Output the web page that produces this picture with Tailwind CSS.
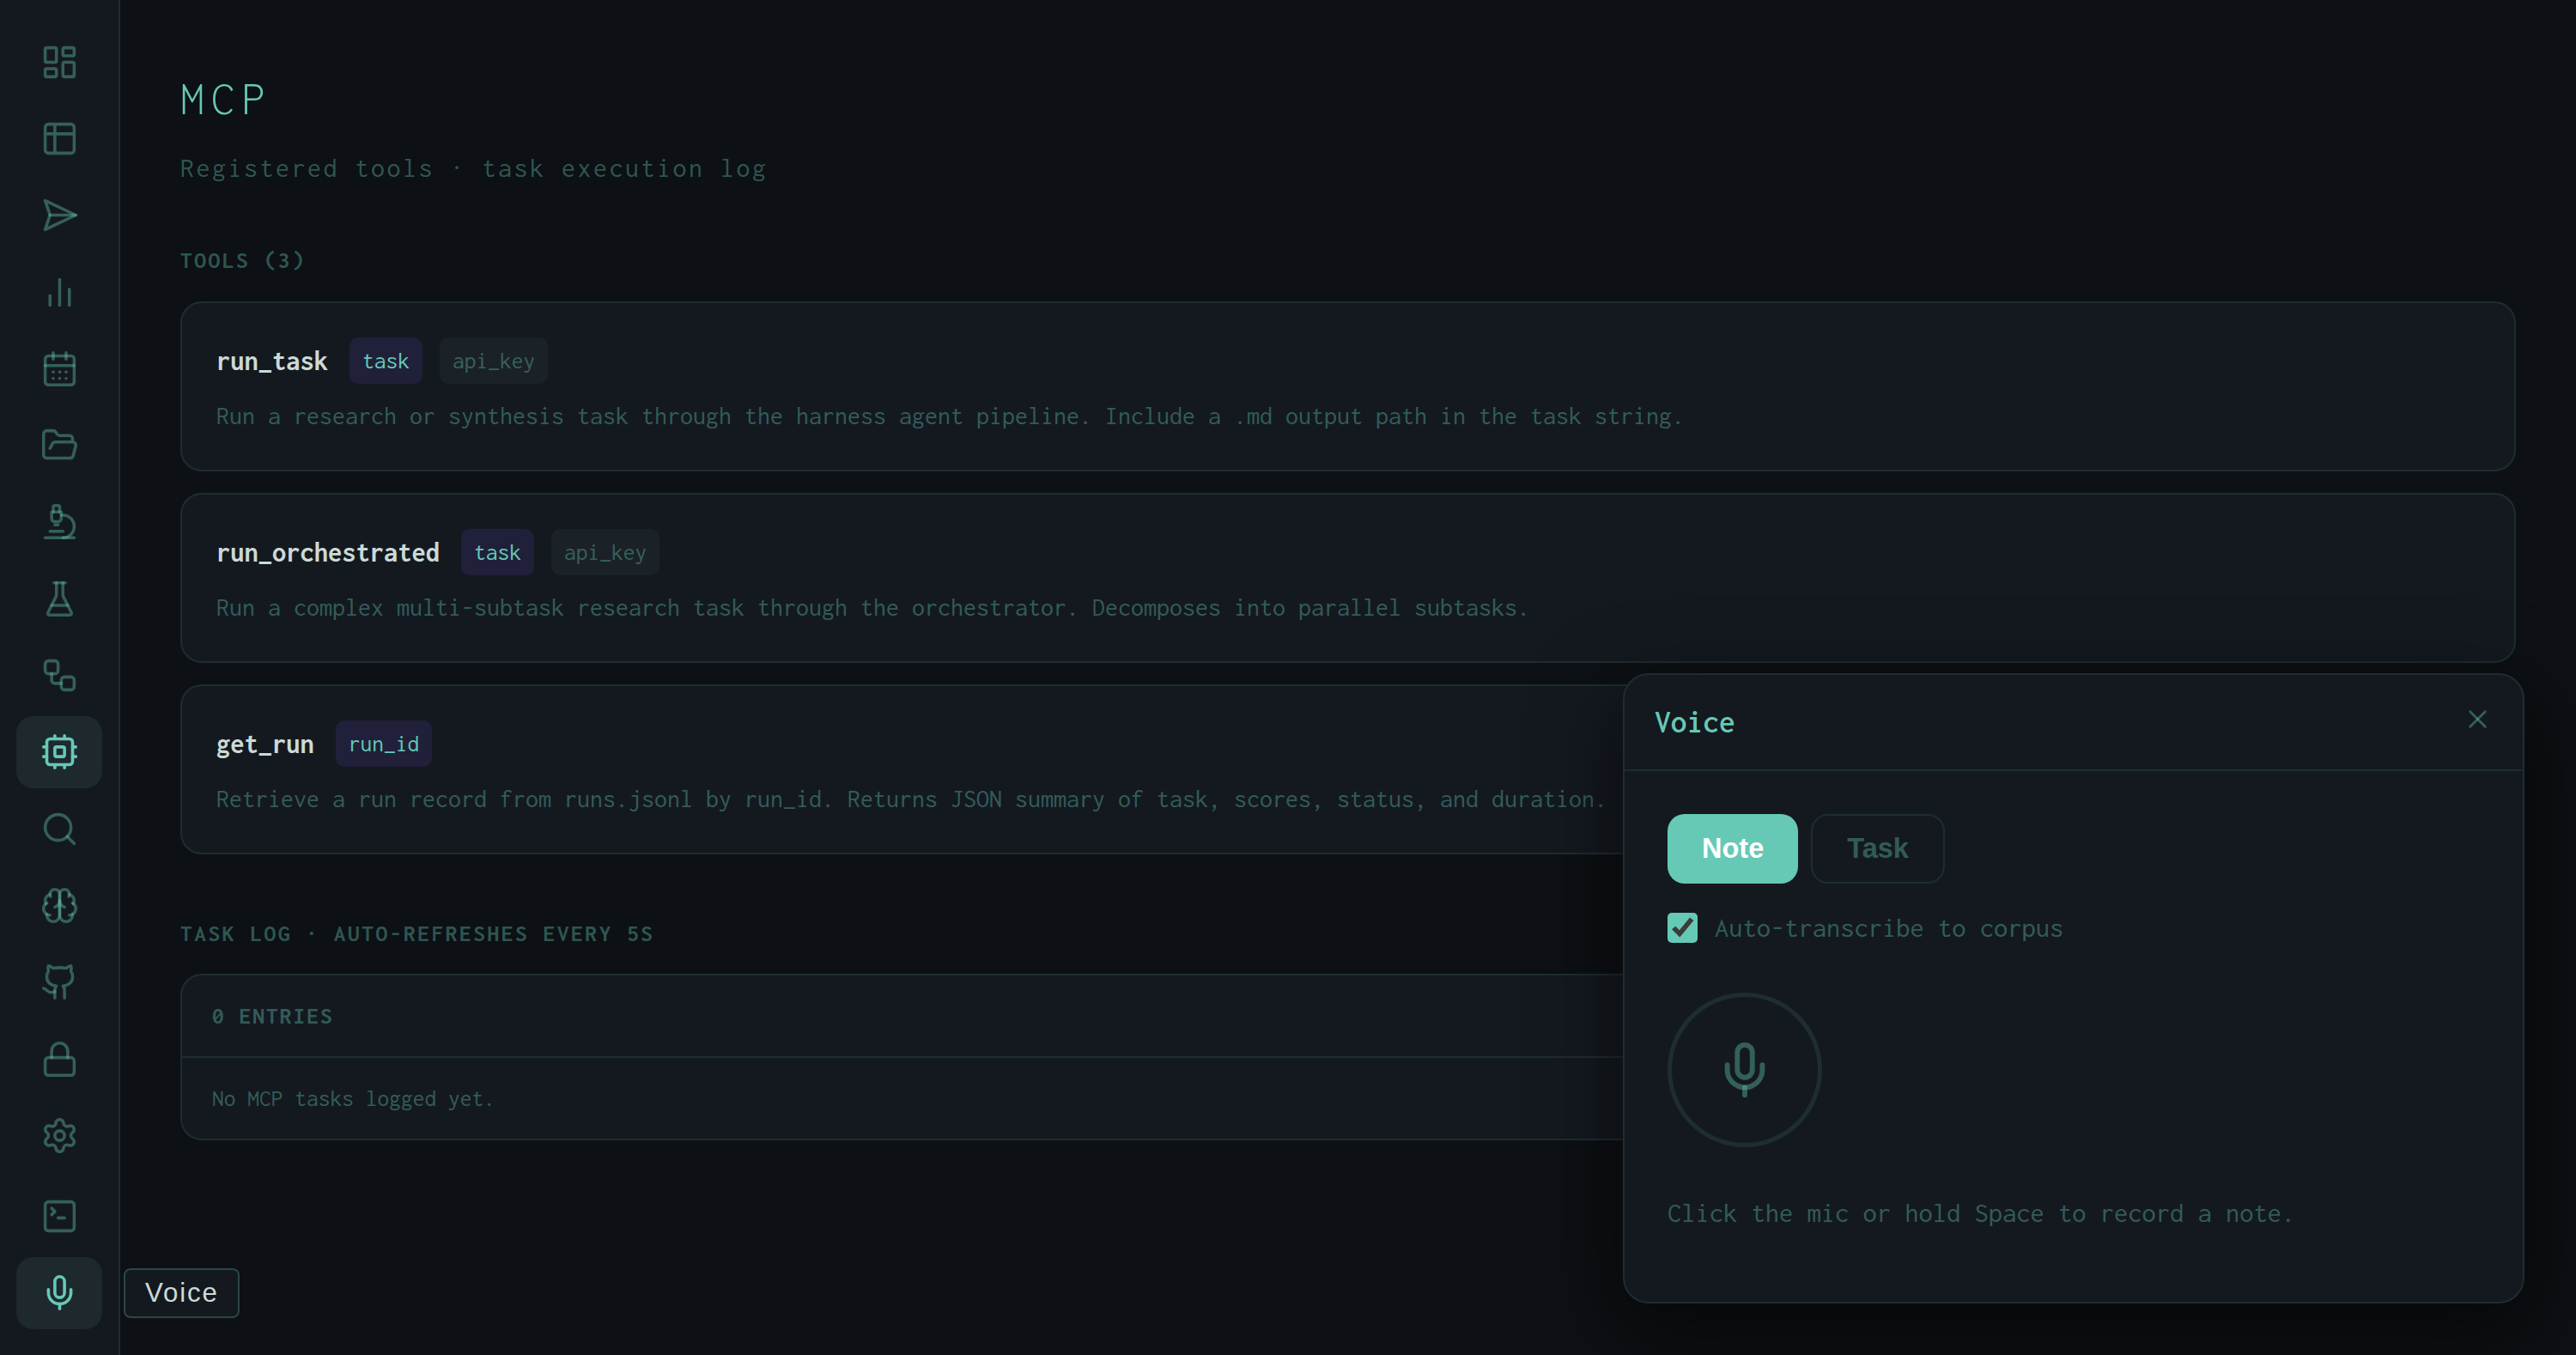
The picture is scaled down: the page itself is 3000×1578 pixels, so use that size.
<!DOCTYPE html>
<html lang="en">
<head>
<meta charset="utf-8">
<title>MCP</title>
<script src="https://cdn.jsdelivr.net/npm/@tailwindcss/browser@4"></script>
</head>
<body class="relative flex h-[1578px] w-[3000px] overflow-hidden bg-[#0d1014] font-['Inconsolata',monospace] text-[#ccdad6]">

<!-- icon symbols, 24px grid -->
<svg class="hidden">
  <symbol id="dashboard" viewBox="0 0 24 24"><rect width="7" height="9" x="3" y="3" rx="1"/><rect width="7" height="5" x="14" y="3" rx="1"/><rect width="7" height="9" x="14" y="12" rx="1"/><rect width="7" height="5" x="3" y="16" rx="1"/></symbol>
  <symbol id="table" viewBox="0 0 24 24"><path d="M9 3H5a2 2 0 0 0-2 2v4m6-6h10a2 2 0 0 1 2 2v4M9 3v18m0 0h10a2 2 0 0 0 2-2V9M9 21H5a2 2 0 0 1-2-2V9m0 0h18"/></symbol>
  <symbol id="send" viewBox="0 0 24 24"><path d="m3 3 3 9-3 9 19-9Z"/><path d="M6 12h16"/></symbol>
  <symbol id="bars" viewBox="0 0 24 24"><path d="M18 20V10"/><path d="M12 20V4"/><path d="M6 20v-6"/></symbol>
  <symbol id="calendar" viewBox="0 0 24 24"><path d="M8 2v4"/><path d="M16 2v4"/><rect width="18" height="18" x="3" y="4" rx="2"/><path d="M3 10h18"/><path d="M8 14h.01"/><path d="M12 14h.01"/><path d="M16 14h.01"/><path d="M8 18h.01"/><path d="M12 18h.01"/><path d="M16 18h.01"/></symbol>
  <symbol id="folder" viewBox="0 0 24 24"><path d="m6 14 1.5-2.9A2 2 0 0 1 9.24 10H20a2 2 0 0 1 1.94 2.5l-1.54 6a2 2 0 0 1-1.95 1.5H4a2 2 0 0 1-2-2V5a2 2 0 0 1 2-2h3.9a2 2 0 0 1 1.69.9l.81 1.2a2 2 0 0 0 1.67.9H18a2 2 0 0 1 2 2v2"/></symbol>
  <symbol id="microscope" viewBox="0 0 24 24"><path d="M6 18h8"/><path d="M3 22h18"/><path d="M14 22a7 7 0 1 0 0-14h-1"/><path d="M9 14h2"/><path d="M9 12a2 2 0 0 1-2-2V6h6v4a2 2 0 0 1-2 2Z"/><path d="M12 6V3a1 1 0 0 0-1-1H9a1 1 0 0 0-1 1v3"/></symbol>
  <symbol id="flask" viewBox="0 0 24 24"><path d="M10 2v7.527a2 2 0 0 1-.211.896L4.72 20.55a1 1 0 0 0 .9 1.45h12.76a1 1 0 0 0 .9-1.45l-5.069-10.127A2 2 0 0 1 14 9.527V2"/><path d="M8.5 2h7"/><path d="M7 16h10"/></symbol>
  <symbol id="workflow" viewBox="0 0 24 24"><rect width="8" height="8" x="3" y="3" rx="2"/><path d="M7 11v4a2 2 0 0 0 2 2h4"/><rect width="8" height="8" x="13" y="13" rx="2"/></symbol>
  <symbol id="cpu" viewBox="0 0 24 24"><rect width="16" height="16" x="4" y="4" rx="2"/><rect width="6" height="6" x="9" y="9" rx="1"/><path d="M15 2v2"/><path d="M15 20v2"/><path d="M2 15h2"/><path d="M2 9h2"/><path d="M20 15h2"/><path d="M20 9h2"/><path d="M9 2v2"/><path d="M9 20v2"/></symbol>
  <symbol id="search" viewBox="0 0 24 24"><circle cx="11" cy="11" r="8"/><path d="m21 21-4.3-4.3"/></symbol>
  <symbol id="brain" viewBox="0 0 24 24"><path d="M12 5a3 3 0 1 0-5.997.125 4 4 0 0 0-2.526 5.77 4 4 0 0 0 .556 6.588A4 4 0 1 0 12 18Z"/><path d="M12 5a3 3 0 1 1 5.997.125 4 4 0 0 1 2.526 5.77 4 4 0 0 1-.556 6.588A4 4 0 1 1 12 18Z"/><path d="M15 13a4.5 4.5 0 0 1-3-4 4.5 4.5 0 0 1-3 4"/><path d="M17.599 6.5a3 3 0 0 0 .399-1.375"/><path d="M6.003 5.125A3 3 0 0 0 6.401 6.5"/><path d="M3.477 10.896a4 4 0 0 1 .585-.396"/><path d="M19.938 10.5a4 4 0 0 1 .585.396"/><path d="M6 18a4 4 0 0 1-1.967-.516"/><path d="M19.967 17.484A4 4 0 0 1 18 18"/></symbol>
  <symbol id="github" viewBox="0 0 24 24"><path d="M15 22v-4a4.8 4.8 0 0 0-1-3.5c3 0 6-2 6-5.5.08-1.25-.27-2.48-1-3.5.28-1.15.28-2.35 0-3.5 0 0-1 0-3 1.5-2.64-.5-5.36-.5-8 0C6 2 5 2 5 2c-.3 1.15-.3 2.35 0 3.5A5.403 5.403 0 0 0 4 9c0 3.5 3 5.5 6 5.5-.39.49-.68 1.05-.85 1.65-.17.6-.22 1.23-.15 1.85v4"/><path d="M9 18c-4.51 2-5-2-7-2"/></symbol>
  <symbol id="lock" viewBox="0 0 24 24"><rect width="18" height="11" x="3" y="11" rx="2"/><path d="M7 11V7a5 5 0 0 1 10 0v4"/></symbol>
  <symbol id="settings" viewBox="0 0 24 24"><path d="M9.671 4.136a2.34 2.34 0 0 1 4.659 0 2.34 2.34 0 0 0 3.319 1.915 2.34 2.34 0 0 1 2.33 4.033 2.34 2.34 0 0 0 0 3.831 2.34 2.34 0 0 1-2.33 4.033 2.34 2.34 0 0 0-3.319 1.915 2.34 2.34 0 0 1-4.659 0 2.34 2.34 0 0 0-3.32-1.915 2.34 2.34 0 0 1-2.33-4.033 2.34 2.34 0 0 0 0-3.831A2.34 2.34 0 0 1 6.35 6.051a2.34 2.34 0 0 0 3.319-1.915"/><circle cx="12" cy="12" r="3"/></symbol>
  <symbol id="terminal" viewBox="0 0 24 24"><path d="m7 11 2-2-2-2"/><path d="M11 13h4"/><rect width="18" height="18" x="3" y="3" rx="2"/></symbol>
  <symbol id="mic" viewBox="0 0 24 24"><path d="M12 19v3"/><path d="M19 10v2a7 7 0 0 1-14 0v-2"/><rect width="6" height="13" x="9" y="2" rx="3"/></symbol>
  <symbol id="close" viewBox="0 0 24 24"><path d="M18 6 6 18"/><path d="m6 6 12 12"/></symbol>
</svg>

<aside class="flex w-[140px] shrink-0 flex-col items-center justify-between border-r-2 border-[#1e2d31] bg-[#141920] py-[30px]">
  <nav class="flex flex-col gap-[5px] text-[#66c9b5]/40 [&>a]:flex [&>a]:h-[84.3px] [&>a]:w-[100px] [&>a]:items-center [&>a]:justify-center [&>a]:rounded-[20px] [&_svg]:size-[45px] [&_svg]:fill-none [&_svg]:stroke-current [&_svg]:stroke-[1.9] [&_svg]:[stroke-linecap:round] [&_svg]:[stroke-linejoin:round]">
    <a><svg><use href="#dashboard"/></svg></a>
    <a><svg><use href="#table"/></svg></a>
    <a><svg><use href="#send"/></svg></a>
    <a><svg><use href="#bars"/></svg></a>
    <a><svg><use href="#calendar"/></svg></a>
    <a><svg><use href="#folder"/></svg></a>
    <a><svg><use href="#microscope"/></svg></a>
    <a><svg><use href="#flask"/></svg></a>
    <a><svg><use href="#workflow"/></svg></a>
    <a class="bg-[#1e292e] text-[#66c9b5]"><svg><use href="#cpu"/></svg></a>
    <a><svg><use href="#search"/></svg></a>
    <a><svg><use href="#brain"/></svg></a>
    <a><svg><use href="#github"/></svg></a>
    <a><svg><use href="#lock"/></svg></a>
    <a><svg><use href="#settings"/></svg></a>
  </nav>
  <nav class="flex flex-col gap-[5px] text-[#66c9b5]/40 [&>a]:flex [&>a]:h-[84.3px] [&>a]:w-[100px] [&>a]:items-center [&>a]:justify-center [&>a]:rounded-[20px] [&_svg]:size-[45px] [&_svg]:fill-none [&_svg]:stroke-current [&_svg]:stroke-[1.9] [&_svg]:[stroke-linecap:round] [&_svg]:[stroke-linejoin:round]">
    <a><svg><use href="#terminal"/></svg></a>
    <a class="bg-[#1e292e] text-[#66c9b5]"><svg><use href="#mic"/></svg></a>
  </nav>
</aside>

<main class="flex-1 p-[70px]">
  <h1 class="text-[56px] leading-[89px] font-[320] tracking-[7.6px] text-[#66c9b5]">MCP</h1>
  <p class="mt-[11px] text-[32px] leading-[51px] tracking-[2.5px] text-[#66c9b5]/40">Registered tools · task execution log</p>

  <h2 class="mt-[60px] mb-[26px] text-[27.5px] leading-[44px] font-[650] tracking-[2.5px] text-[#66c9b5]/40">TOOLS (3)</h2>
  <div class="flex flex-col gap-[25px]">
    <section class="flex flex-col gap-3 rounded-[25px] border-2 border-[#1e2d31] bg-[#141920] px-10 pt-10 pb-[38px]">
      <div class="flex h-[54px] items-center gap-5">
        <span class="mr-[5px] text-[32.5px] font-[660]">run_task</span>
        <span class="flex h-[54px] items-center rounded-[10px] bg-[#20203a] px-[15px] text-[27.5px] text-[#66c9b5]">task</span>
        <span class="flex h-[54px] items-center rounded-[10px] bg-[#1a2127] px-[15px] text-[27.5px] text-[#66c9b5]/40">api_key</span>
      </div>
      <p class="text-[30px] leading-[50px] text-[#66c9b5]/40">Run a research or synthesis task through the harness agent pipeline. Include a .md output path in the task string.</p>
    </section>
    <section class="flex flex-col gap-3 rounded-[25px] border-2 border-[#1e2d31] bg-[#141920] px-10 pt-10 pb-[38px]">
      <div class="flex h-[54px] items-center gap-5">
        <span class="mr-[5px] text-[32.5px] font-[660]">run_orchestrated</span>
        <span class="flex h-[54px] items-center rounded-[10px] bg-[#20203a] px-[15px] text-[27.5px] text-[#66c9b5]">task</span>
        <span class="flex h-[54px] items-center rounded-[10px] bg-[#1a2127] px-[15px] text-[27.5px] text-[#66c9b5]/40">api_key</span>
      </div>
      <p class="text-[30px] leading-[50px] text-[#66c9b5]/40">Run a complex multi-subtask research task through the orchestrator. Decomposes into parallel subtasks.</p>
    </section>
    <section class="flex flex-col gap-3 rounded-[25px] border-2 border-[#1e2d31] bg-[#141920] px-10 pt-10 pb-[38px]">
      <div class="flex h-[54px] items-center gap-5">
        <span class="mr-[5px] text-[32.5px] font-[660]">get_run</span>
        <span class="flex h-[54px] items-center rounded-[10px] bg-[#20203a] px-[15px] text-[27.5px] text-[#66c9b5]">run_id</span>
      </div>
      <p class="text-[30px] leading-[50px] text-[#66c9b5]/40">Retrieve a run record from runs.jsonl by run_id. Returns JSON summary of task, scores, status, and duration.</p>
    </section>
  </div>

  <h2 class="mt-[70px] mb-[25px] text-[27.5px] leading-[44px] font-[650] tracking-[2.5px] text-[#66c9b5]/40">TASK LOG · AUTO-REFRESHES EVERY 5S</h2>
  <section class="rounded-[25px] border-2 border-[#1e2d31] bg-[#141920] text-[27.5px] text-[#66c9b5]/40">
    <div class="flex h-24 items-center border-b-2 border-[#1e2d31] px-[35px] font-[650] tracking-[2px]">0 ENTRIES</div>
    <div class="flex h-[94px] items-center px-[35px]">No MCP tasks logged yet.</div>
  </section>
</main>

<!-- sidebar tooltip -->
<div class="absolute top-[1477px] left-36 flex h-[58px] w-[135px] items-center rounded-[8px] border-2 border-[#2a4745] bg-[#141920] pl-[23px] font-['Liberation_Sans',sans-serif] text-[31.25px] tracking-[1.85px]">Voice</div>

<!-- floating voice panel -->
<section class="absolute right-[60px] bottom-[60px] flex h-[734px] w-[1050px] flex-col rounded-[30px] border-2 border-[#1e2d31] bg-[#141920] shadow-[0_30px_100px_rgba(0,0,0,0.6)]">
  <header class="flex h-28 items-center justify-between border-b-2 border-[#1e2d31] px-[35px]">
    <h3 class="text-[37.5px] font-[640] text-[#66c9b5]">Voice</h3>
    <svg class="mb-[7px] size-[35px] fill-none stroke-current stroke-2 text-[#66c9b5]/40 [stroke-linecap:round]"><use href="#close"/></svg>
  </header>
  <div class="flex flex-col px-[50px] pt-[50px]">
    <div class="flex gap-[15px] font-['Liberation_Sans',sans-serif] text-[32.5px] font-bold">
      <button class="h-[81px] rounded-[20px] bg-[#66c9b5] px-10 text-white">Note</button>
      <button class="h-[81px] rounded-[20px] border-2 border-[#1e2d31] px-10 text-[#66c9b5]/40">Task</button>
    </div>
    <label class="mt-[25px] flex h-[53px] items-center gap-5 text-[32.5px] text-[#66c9b5]/40">
      <svg class="size-[35px]" viewBox="0 0 35 35"><rect width="35" height="35" rx="5" fill="#66c9b5"/><path d="M5 19.3 9.3 15.7 13.8 20.3 26 5.5 30.4 9 14.3 28.5Z" fill="#3b3b3b"/></svg>
      Auto-transcribe to corpus
    </label>
    <div class="mt-[49px] flex size-[180px] items-center justify-center rounded-full border-5 border-[#1e2d31]">
      <svg class="size-[70px] fill-none stroke-current stroke-2 text-[#66c9b5]/40 [stroke-linecap:round] [stroke-linejoin:round]"><use href="#mic"/></svg>
    </div>
    <p class="mt-[50px] text-[32.5px] leading-[52px] text-[#66c9b5]/40">Click the mic or hold Space to record a note.</p>
  </div>
</section>
</body>
</html>
